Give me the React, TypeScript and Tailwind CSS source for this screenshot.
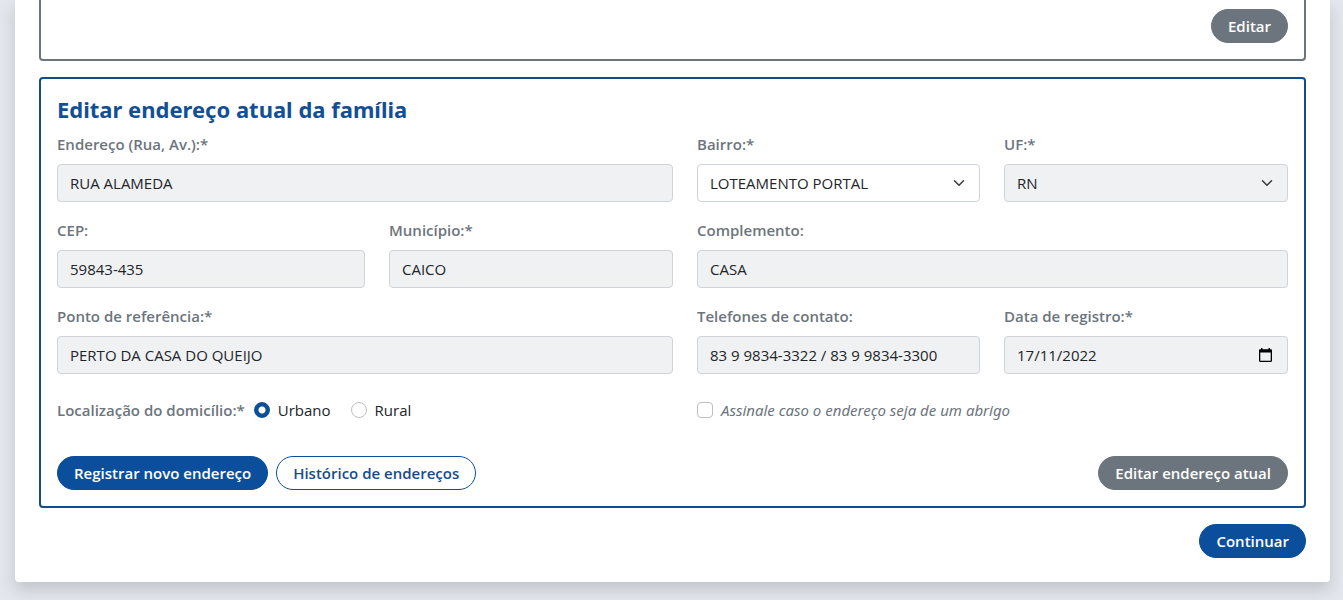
import type { ReactNode, InputHTMLAttributes, SelectHTMLAttributes } from "react";

const labelClass = "block text-[15px] leading-6 font-semibold text-[#6c757d]";
const controlClass =
  "block h-[38px] w-full appearance-none rounded border border-[#ced4da] px-3 text-[15px] leading-6 text-[#212529] outline-none";
const radioClass =
  "size-4 appearance-none rounded-full border border-[#bfbfbf] bg-white checked:border-[#0b4f9c] checked:bg-[radial-gradient(circle,#fff_3px,#0b4f9c_4px)]";

function Field({ id, label, span = "", children }: { id: string; label: string; span?: string; children: ReactNode }) {
  return (
    <div className={span}>
      <label htmlFor={id} className={`${labelClass} mb-2`}>
        {label}
      </label>
      <div className="relative">{children}</div>
    </div>
  );
}

function TextInput(props: InputHTMLAttributes<HTMLInputElement>) {
  return <input type="text" readOnly className={`${controlClass} bg-[#f0f1f3]`} {...props} />;
}

function Select({ tone, ...props }: SelectHTMLAttributes<HTMLSelectElement> & { tone: string }) {
  return (
    <>
      <select className={`${controlClass} ${tone} pr-9`} {...props} />
      <svg
        viewBox="0 0 16 16"
        className="pointer-events-none absolute top-[13px] right-[13px] h-3 w-4"
        fill="none"
        stroke="#343a40"
        strokeWidth="2"
        strokeLinecap="round"
        strokeLinejoin="round"
        aria-hidden="true"
      >
        <path d="m2 5 6 6 6-6" />
      </svg>
    </>
  );
}

function CalendarIcon() {
  return (
    <svg
      viewBox="0 0 13 14"
      className="pointer-events-none absolute top-3 right-4 h-[14px] w-[13px]"
      fill="#000"
      aria-hidden="true"
    >
      <path
        fillRule="evenodd"
        d="M2 0h1.5v1.3h6V0H11v1.3h.8c.7 0 1.2.5 1.2 1.2v10.3c0 .7-.5 1.2-1.2 1.2H1.2C.5 14 0 13.5 0 12.8V2.5c0-.7.5-1.2 1.2-1.2H2V0ZM1.3 4.6v8.1h10.4V4.6H1.3Z"
      />
    </svg>
  );
}

function PillButton({ tone, children }: { tone: string; children: ReactNode }) {
  return (
    <button
      type="button"
      className={`h-[34px] cursor-pointer rounded-full border px-4 text-[15px] leading-6 font-semibold whitespace-nowrap ${tone}`}
    >
      {children}
    </button>
  );
}

const gray = "border-[#6c757d] bg-[#6c757d] text-white";
const blue = "border-[#0b4f9c] bg-[#0b4f9c] text-white";
const outline = "border-[#0b4f9c] bg-white text-[#1a4b8c]";

export default function App() {
  return (
    <div className="min-h-screen bg-[#e3e7ed] pr-[13px] pb-[18px] pl-[15px] font-['Open_Sans','Noto_Sans',sans-serif] text-[15px] text-[#212529]">
      <main className="rounded-b bg-white px-6 pb-6 shadow-[0_8px_16px_rgba(0,0,0,0.15)]">
        <section className="mb-4 flex justify-end rounded-b border-2 border-t-0 border-[#6c757d] px-4 pt-[9px] pb-4">
          <PillButton tone={gray}>Editar</PillButton>
        </section>

        <section className="rounded border-2 border-[#134b8c] p-4">
          <form>
            <h2 className="mb-2 font-['Noto_Sans',sans-serif] text-[22px] leading-[29px] font-bold text-[#134f96]">
              Editar endereço atual da família
            </h2>

            <div className="grid grid-cols-[minmax(0,308fr)_minmax(0,284fr)_minmax(0,283fr)_minmax(0,284fr)] gap-x-6 gap-y-4">
              <Field id="endereco" label="Endereço (Rua, Av.):*" span="col-span-2">
                <TextInput id="endereco" defaultValue="RUA ALAMEDA" />
              </Field>
              <Field id="bairro" label="Bairro:*">
                <Select id="bairro" tone="bg-white">
                  <option>LOTEAMENTO PORTAL</option>
                </Select>
              </Field>
              <Field id="uf" label="UF:*">
                <Select id="uf" tone="bg-[#f0f1f3]">
                  <option>RN</option>
                </Select>
              </Field>

              <Field id="cep" label="CEP:">
                <TextInput id="cep" defaultValue="59843-435" />
              </Field>
              <Field id="municipio" label="Município:*">
                <TextInput id="municipio" defaultValue="CAICO" />
              </Field>
              <Field id="complemento" label="Complemento:" span="col-span-2">
                <TextInput id="complemento" defaultValue="CASA" />
              </Field>

              <Field id="referencia" label="Ponto de referência:*" span="col-span-2">
                <TextInput id="referencia" defaultValue="PERTO DA CASA DO QUEIJO" />
              </Field>
              <Field id="telefones" label="Telefones de contato:">
                <TextInput id="telefones" defaultValue="83 9 9834-3322 / 83 9 9834-3300" />
              </Field>
              <Field id="data" label="Data de registro:*">
                <TextInput id="data" defaultValue="17/11/2022" />
                <CalendarIcon />
              </Field>

              <fieldset className="col-span-2 mt-2 flex items-center leading-6">
                <legend className={`${labelClass} float-left mr-[9px]`}>Localização do domicílio:*</legend>
                <label className="mr-5 flex items-center gap-2">
                  <input type="radio" name="localizacao" defaultChecked className={radioClass} />
                  Urbano
                </label>
                <label className="flex items-center gap-2">
                  <input type="radio" name="localizacao" className={radioClass} />
                  Rural
                </label>
              </fieldset>
              <label className="col-span-2 mt-2 flex items-center gap-2 font-['Noto_Sans',sans-serif] leading-6 text-[#6c757d] italic">
                <input
                  type="checkbox"
                  className="size-4 appearance-none rounded border border-[#bfbfbf] bg-white checked:bg-[#0b4f9c]"
                />
                Assinale caso o endereço seja de um abrigo
              </label>
            </div>

            <div className="mt-[34px] flex flex-wrap gap-2">
              <PillButton tone={blue}>Registrar novo endereço</PillButton>
              <PillButton tone={outline}>Histórico de endereços</PillButton>
              <div className="ml-auto">
                <PillButton tone={gray}>Editar endereço atual</PillButton>
              </div>
            </div>
          </form>
        </section>

        <div className="mt-4 flex justify-end">
          <PillButton tone={blue}>Continuar</PillButton>
        </div>
      </main>
    </div>
  );
}
